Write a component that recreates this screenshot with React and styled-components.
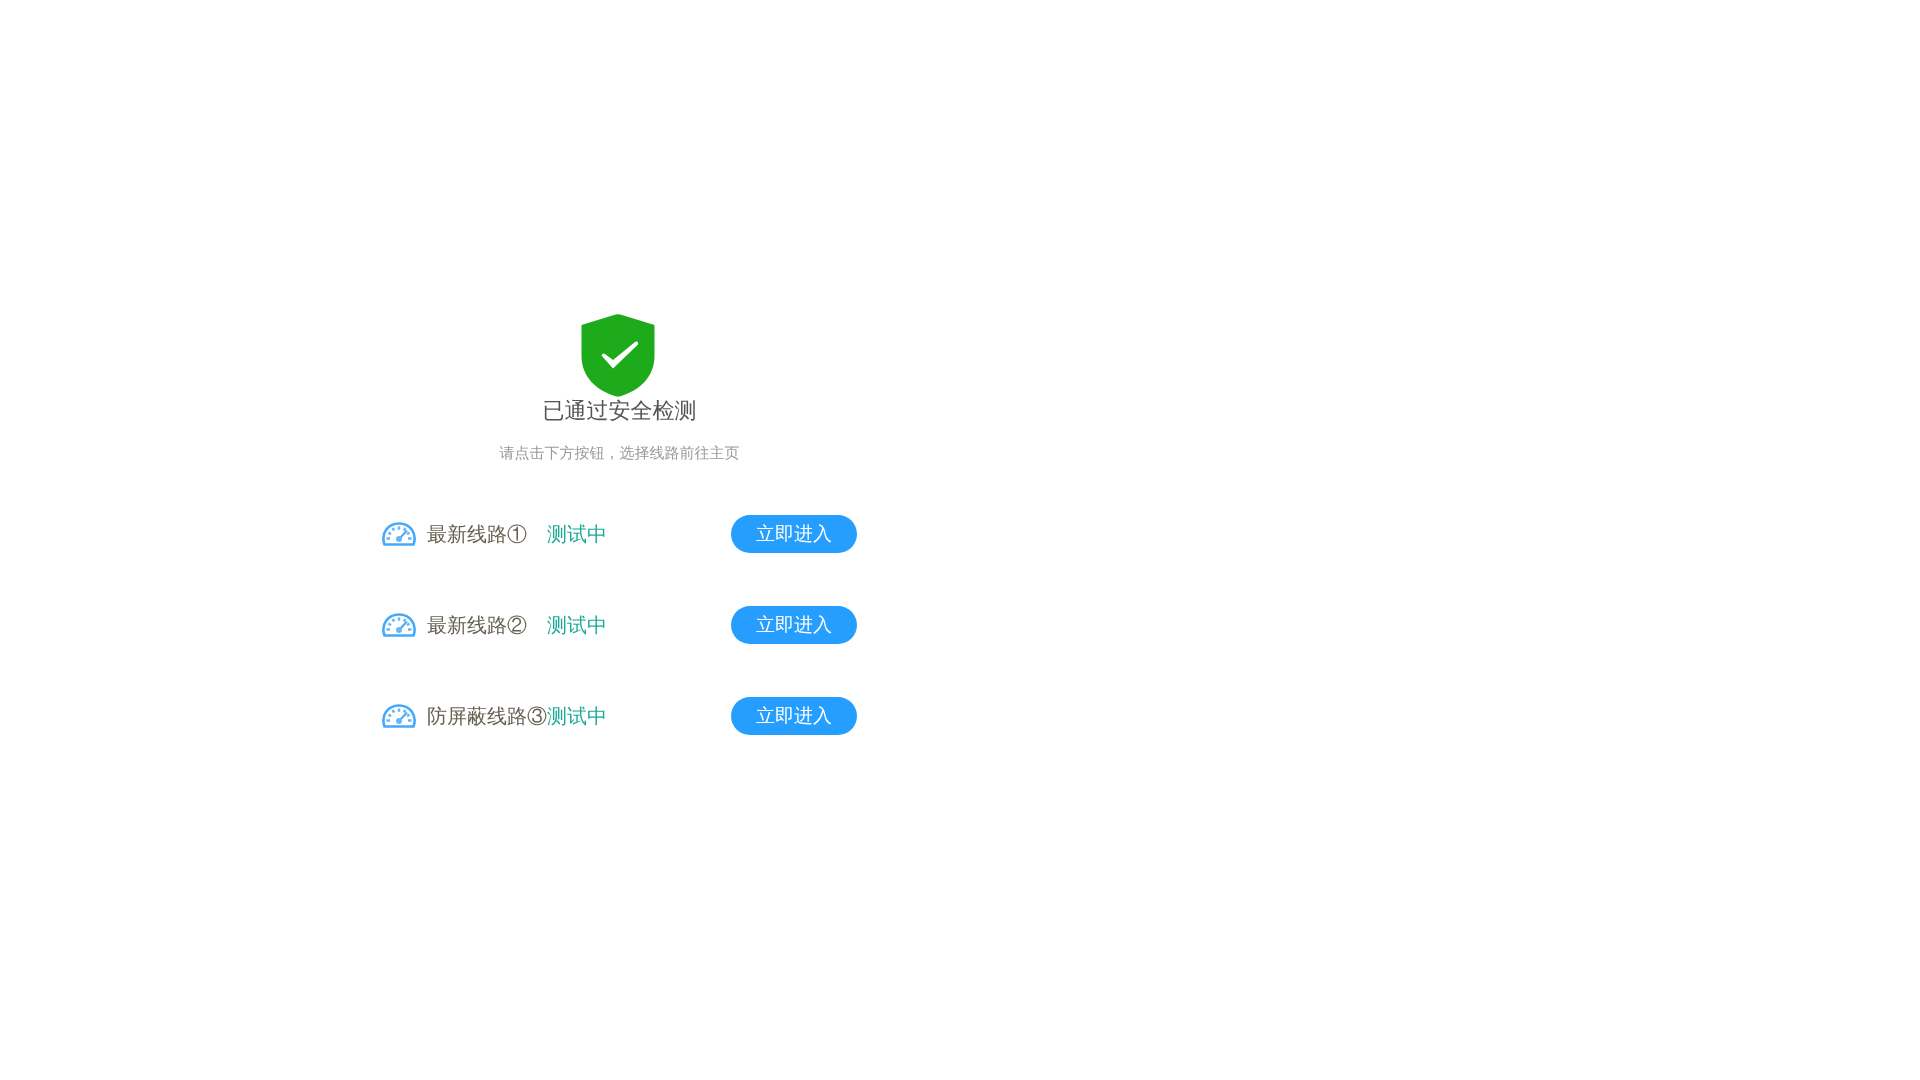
import React from "react";
import styled, { createGlobalStyle } from "styled-components";

const GlobalStyle = createGlobalStyle`
  body {
    margin: 0;
    background: #fff;
    font-family: "Liberation Sans", "Droid Sans Fallback", "WenQuanYi Zen Hei",
      "WenQuanYi Micro Hei", "Noto Sans CJK SC", sans-serif;
  }
`;

const Page = styled.main`
  box-sizing: border-box;
  width: 100%;
  max-width: 1239px;
  margin: 0;
  padding: 314px 24px 40px;
  display: flex;
  flex-direction: column;
  align-items: center;
`;

const ShieldIcon = styled.svg`
  display: block;
  width: 77px;
  height: 84px;
`;

const Title = styled.h1`
  margin: 0;
  font-size: 22px;
  line-height: 26px;
  font-weight: 400;
  color: #555;
`;

const Hint = styled.p`
  margin: 18px 0 0;
  font-size: 15px;
  line-height: 22px;
  color: #999;
`;

const RouteList = styled.ul`
  box-sizing: border-box;
  width: 100%;
  max-width: 475px;
  margin: 51px 0 0;
  padding: 0;
  list-style: none;
  display: grid;
  gap: 53px;
`;

const Route = styled.li`
  display: flex;
  align-items: center;
  height: 38px;
  font-size: 20px;
  line-height: 30px;
`;

const GaugeIcon = styled.svg`
  flex: none;
  width: 34px;
  height: 24px;
  margin-right: 11px;
`;

const RouteName = styled.span`
  width: 120px;
  white-space: nowrap;
  color: #666051;
`;

const RouteStatus = styled.span`
  color: #1aaa96;
`;

const EnterButton = styled.button`
  width: 126px;
  height: 38px;
  margin-left: auto;
  padding: 0;
  border: 0;
  border-radius: 19px;
  background: #269eff;
  color: #fff;
  font: inherit;
  font-size: 19px;
  cursor: pointer;
`;

const routes = ["最新线路①", "最新线路②", "防屏蔽线路③"];

function Shield() {
  return (
    <ShieldIcon viewBox="0 0 77 84" aria-hidden="true">
      <path
        d="M0.500 11 L33 1 Q37 -0.500 41 1 L73.500 11 V42 C73.500 64 57 77 40 82 Q37 83 34 82 C17 77 0.500 64 0.500 42 Z"
        fill="#1eab1b"
      />
      <path
        d="M20.500 41.500 Q21.500 38.500 24 40 L32 46 L54 28 Q57.500 26.500 57 30.500 L32 54.500 Z"
        fill="#fff"
      />
    </ShieldIcon>
  );
}

function Gauge() {
  return (
    <GaugeIcon viewBox="0 0 34 24" fill="none" stroke="#45a9fb" aria-hidden="true">
      <path
        d="M2.500 22.500 C-1.500 11 6 1.500 17 1.500 C28 1.500 35.500 11 31.500 22.500 Z"
        strokeWidth="2.600"
        strokeLinejoin="round"
      />
      <path
        d="M4.500 16.500h3.500M26 16.500h3.500M6.500 10.500l2.500 1.700M10.500 6l1.700 2.500M17 4.500v3.300M23.500 6L21.800 8.500M27.500 10.500l-2.500 1.700"
        strokeWidth="2.400"
        opacity="0.85"
      />
      <path d="M17.500 16.500L25 8.500" strokeWidth="2" />
      <circle cx="17" cy="17" r="3" fill="#66b8fa" stroke="none" />
    </GaugeIcon>
  );
}

export default function App() {
  return (
    <>
      <GlobalStyle />
      <Page>
        <Shield />
        <Title>已通过安全检测</Title>
        <Hint>请点击下方按钮，选择线路前往主页</Hint>
        <RouteList>
          {routes.map((name) => (
            <Route key={name}>
              <Gauge />
              <RouteName>{name}</RouteName>
              <RouteStatus>测试中</RouteStatus>
              <EnterButton type="button">立即进入</EnterButton>
            </Route>
          ))}
        </RouteList>
      </Page>
    </>
  );
}
